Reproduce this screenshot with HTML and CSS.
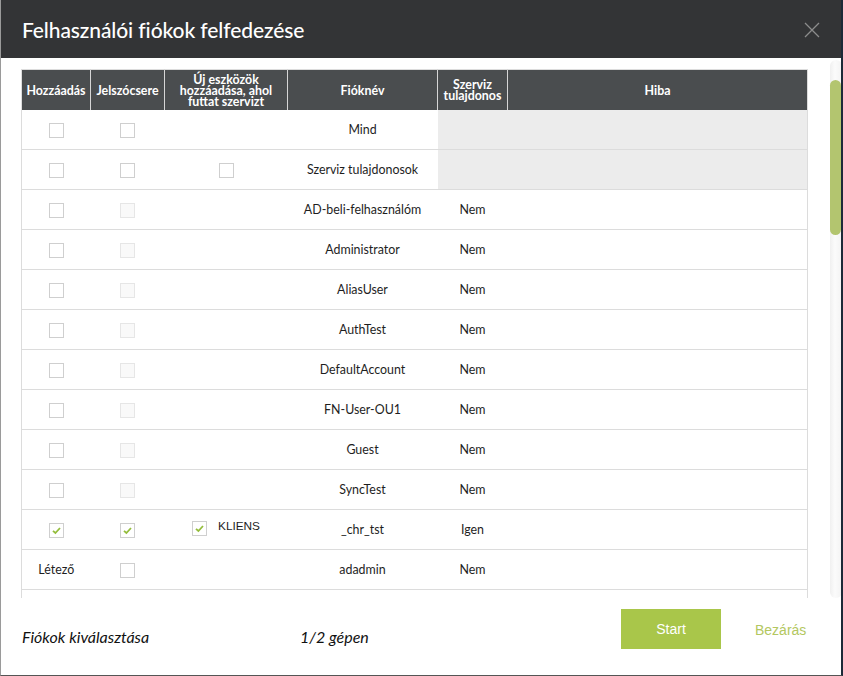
FILE: index.html
```html
<!DOCTYPE html>
<html>
<head>
<meta charset="utf-8">
<link rel="stylesheet" href="styles.css">
</head>
<body>
<div class="dialog">
  <div class="titlebar">
    <h1 class="title">Felhasználói fiókok felfedezése</h1>
    <svg class="close" width="16" height="16" viewBox="0 0 16 16"><path d="M1 1 L15 15 M15 1 L1 15" stroke="#8c8c8c" stroke-width="1.3" fill="none"/></svg>
  </div>
  <div class="body">
    <div class="scrollarea">
      <table class="grid">
        <colgroup>
          <col class="c1"><col class="c2"><col class="c3"><col class="c4"><col class="c5"><col class="c6">
        </colgroup>
        <thead>
          <tr>
            <th>Hozzáadás</th>
            <th>Jelszócsere</th>
            <th>Új eszközök hozzáadása, ahol futtat szervizt</th>
            <th>Fióknév</th>
            <th>Szerviz tulajdonos</th>
            <th>Hiba</th>
          </tr>
        </thead>
        <tbody>
          <tr>
            <td><span class="cb"></span></td>
            <td><span class="cb"></span></td>
            <td></td>
            <td>Mind</td>
            <td class="shade"></td>
            <td class="shade"></td>
          </tr>
          <tr>
            <td><span class="cb"></span></td>
            <td><span class="cb"></span></td>
            <td><span class="cb"></span></td>
            <td>Szerviz tulajdonosok</td>
            <td class="shade"></td>
            <td class="shade"></td>
          </tr>
          <tr><td><span class="cb"></span></td><td><span class="cb dis"></span></td><td></td><td>AD-beli-felhasználóm</td><td>Nem</td><td></td></tr>
          <tr><td><span class="cb"></span></td><td><span class="cb dis"></span></td><td></td><td>Administrator</td><td>Nem</td><td></td></tr>
          <tr><td><span class="cb"></span></td><td><span class="cb dis"></span></td><td></td><td>AliasUser</td><td>Nem</td><td></td></tr>
          <tr><td><span class="cb"></span></td><td><span class="cb dis"></span></td><td></td><td>AuthTest</td><td>Nem</td><td></td></tr>
          <tr><td><span class="cb"></span></td><td><span class="cb dis"></span></td><td></td><td>DefaultAccount</td><td>Nem</td><td></td></tr>
          <tr><td><span class="cb"></span></td><td><span class="cb dis"></span></td><td></td><td>FN-User-OU1</td><td>Nem</td><td></td></tr>
          <tr><td><span class="cb"></span></td><td><span class="cb dis"></span></td><td></td><td>Guest</td><td>Nem</td><td></td></tr>
          <tr><td><span class="cb"></span></td><td><span class="cb dis"></span></td><td></td><td>SyncTest</td><td>Nem</td><td></td></tr>
          <tr>
            <td><span class="cb"><svg width="13" height="13" viewBox="0 0 13 13"><path d="M3 6.8 L5.4 9 L10 4" stroke="#94bd3c" stroke-width="1.8" fill="none"/></svg></span></td>
            <td><span class="cb"><svg width="13" height="13" viewBox="0 0 13 13"><path d="M3 6.8 L5.4 9 L10 4" stroke="#94bd3c" stroke-width="1.8" fill="none"/></svg></span></td>
            <td><span class="kl"><span class="cb"><svg width="13" height="13" viewBox="0 0 13 13"><path d="M3 6.8 L5.4 9 L10 4" stroke="#94bd3c" stroke-width="1.8" fill="none"/></svg></span><span class="kltext">KLIENS</span></span></td>
            <td>_chr_tst</td>
            <td>Igen</td>
            <td></td>
          </tr>
          <tr><td>Létező</td><td><span class="cb"></span></td><td></td><td>adadmin</td><td>Nem</td><td></td></tr>
          <tr><td></td><td></td><td></td><td></td><td></td><td></td></tr>
        </tbody>
      </table>
    </div>
    <div class="track"><div class="thumb"></div></div>
  </div>
  <div class="footer">
    <span class="ftext sel">Fiókok kiválasztása</span>
    <span class="ftext cnt">1/2 gépen</span>
    <button class="start">Start</button>
    <span class="closebtn">Bezárás</span>
  </div>
</div>
</body>
</html>
```

FILE: styles.css
```css
html, body {
  margin: 0;
  padding: 0;
  background: #fff;
}
.dialog {
  width: 843px;
  height: 676px;
  box-sizing: border-box;
  border-left: 1px solid #9a9a9a;
  border-right: 2px solid #1c2a38;
  border-bottom: 1px solid #555;
  display: flex;
  flex-direction: column;
  font-family: Lato, "Noto Sans", sans-serif;
  overflow: hidden;
  background: #fff;
}
.titlebar {
  height: 58px;
  flex: none;
  background: #333436;
  display: flex;
  align-items: center;
  justify-content: space-between;
  padding: 0 21px 0 21px;
}
.title {
  margin: 0;
  color: #fff;
  font-size: 21px;
  font-weight: 500;
  letter-spacing: -0.1px;
}
.close {
  display: block;
  margin-top: 1px;
}
.body {
  height: 540px;
  flex: none;
  display: flex;
  padding-top: 2px;
  box-sizing: border-box;
}
.scrollarea {
  width: 788px;
  margin-left: 20px;
  margin-top: 9px;
  height: 529px;
  overflow: hidden;
  flex: none;
}
.grid {
  width: 787px;
  border-collapse: collapse;
  table-layout: fixed;
  border: 1px solid #dcdcdc;
  font-size: 12.4px;
  color: #1e1e1e;
}
col.c1 { width: 69px; }
col.c2 { width: 74px; }
col.c3 { width: 123px; }
col.c4 { width: 150px; }
col.c5 { width: 70px; }
col.c6 { width: 300px; }
.grid th {
  background: #4a4d4f;
  color: #fff;
  font-size: 12.4px;
  font-weight: 700;
  line-height: 11px;
  height: 40px;
  padding: 0 2px;
  border-left: 1px solid #d6d6d6;
  text-align: center;
  vertical-align: middle;
}
.grid th:first-child { border-left: none; }
.grid td {
  height: 39px;
  border-bottom: 1px solid #dcdcdc;
  text-align: center;
  vertical-align: middle;
  padding: 0;
}
.grid td.shade { background: #ececec; }
.cb {
  display: inline-block;
  width: 13px;
  height: 13px;
  border: 1px solid #cfcfcf;
  background: #fff;
  vertical-align: middle;
}
.cb svg { display: block; }
.cb.dis {
  background: #f9f9f9;
  border-color: #e6e6e6;
}
.kl {
  display: inline-flex;
  align-items: center;
  gap: 11px;
}
.kltext {
  font-family: "Liberation Sans", Arial, sans-serif;
  font-size: 11.8px;
  position: relative;
  top: -2px;
}
.track {
  width: 12px;
  height: 538px;
  margin-left: 21px;
  background: linear-gradient(to right, #f0f0f0, #fbfbfb 40%, #f3f3f3);
  border-radius: 6px;
  padding-top: 20px;
  box-sizing: border-box;
  flex: none;
}
.thumb {
  width: 11px;
  height: 155px;
  border-radius: 6px;
  background: #b3c56f;
}
.footer {
  flex: 1;
  display: flex;
  align-items: flex-start;
  padding-left: 21px;
  padding-top: 11px;
}
.ftext {
  font-style: italic;
  font-size: 16px;
  line-height: 19px;
  color: #111;
  margin-top: 18px;
}
.sel { width: 278px; }
.cnt { width: 321px; }
.start {
  width: 100px;
  height: 40px;
  border: none;
  background: #a9c64a;
  color: #fff;
  font-family: "Liberation Sans", Arial, sans-serif;
  font-size: 14px;
  padding: 0;
  margin: 0;
}
.closebtn {
  margin-left: 34px;
  margin-top: 13px;
  line-height: 16px;
  color: #b3c760;
  font-family: "Liberation Sans", Arial, sans-serif;
  font-size: 14px;
}
```
